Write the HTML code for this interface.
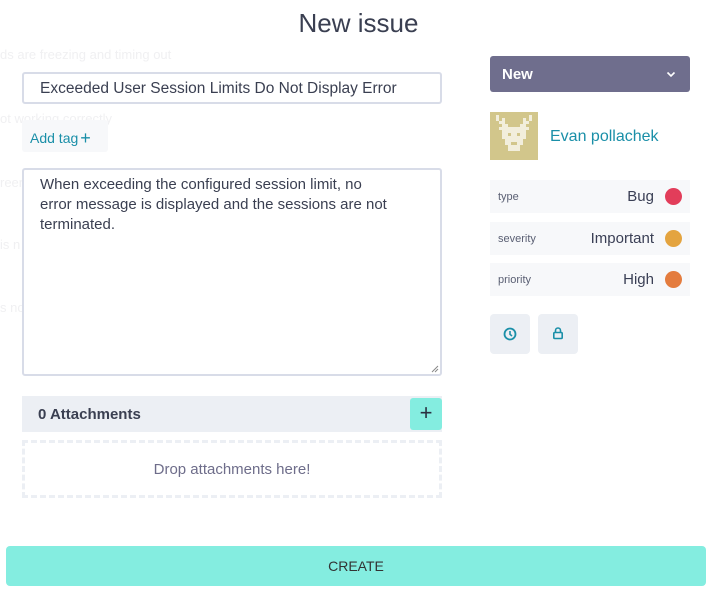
<!DOCTYPE html>
<html><head><meta charset="utf-8"><style>
*{box-sizing:border-box;margin:0;padding:0}
body{width:717px;height:597px;background:#fff;font-family:"Liberation Sans",sans-serif;position:relative;overflow:hidden;color:#3a3f51}
.a{position:absolute}
.bg{color:#f0f0f2;font-size:13px;font-family:"Liberation Sans Narrow","Liberation Sans",sans-serif}
.row{position:absolute;left:490px;width:200px;height:33px;background:#f7f8fa}
.row .l{position:absolute;left:8px;top:11px;font-size:11px;color:#5a5f73}
.row .v{position:absolute;right:36px;top:8px;font-size:15px;color:#3a3f55}
.row .d{position:absolute;right:8px;top:8px;width:17px;height:17px;border-radius:50%}
.ib{position:absolute;top:314px;width:40px;height:40px;background:#eceff4;border-radius:4px}
</style></head><body>
<div class="a bg" style="left:0;top:47px">ds are freezing and timing out</div>
<div class="a bg" style="left:0;top:111px">ot working correctly</div>
<div class="a bg" style="left:0;top:175px">reen</div>
<div class="a bg" style="left:0;top:237px">is n</div>
<div class="a bg" style="left:0;top:300px">s no</div>

<div class="a" style="left:0;width:717px;top:8px;text-align:center;font-size:26px;color:#3a3f51;font-family:'Liberation Sans Narrow','Liberation Sans',sans-serif">New issue</div>

<div class="a" style="left:22px;top:72px;width:420px;height:32px;border:2px solid #d8dce8;border-radius:3px;background:#fff"></div>
<div class="a" style="left:40px;top:80px;font-size:15.5px;color:#3a3f51">Exceeded User Session Limits Do Not Display Error</div>

<div class="a" style="left:22px;top:120px;width:86px;height:32px;background:#f7f8fa;border-radius:3px"></div>
<div class="a" style="left:30px;top:127px;font-size:14px;color:#1a8fa8">Add tag<span style="font-size:18px;position:relative;top:1px;margin-left:2px">+</span></div>

<div class="a" style="left:22px;top:168px;width:420px;height:208px;border:2px solid #d8dce8;border-radius:3px;background:#fff"></div>
<div class="a" style="left:40px;top:175px;width:354px;font-size:15px;line-height:20px;color:#3a3f51">When exceeding the configured session limit, no error message is displayed and the sessions are not terminated.</div>
<svg class="a" style="left:431px;top:365px" width="8" height="8"><path d="M1 7L7 1M4 7L7 4" stroke="#888" stroke-width="1"/></svg>

<div class="a" style="left:22px;top:396px;width:420px;height:36px;background:#eceff4"></div>
<div class="a" style="left:38px;top:406px;font-size:15px;font-weight:bold;color:#3a3f51">0 Attachments</div>
<div class="a" style="left:410px;top:398px;width:32px;height:32px;background:#84ede0;border-radius:3px;text-align:center;font-size:22px;line-height:30px;color:#2a3040">+</div>

<div class="a" style="left:22px;top:440px;width:420px;height:58px;border:3px dashed #eceff4"></div>
<div class="a" style="left:22px;top:461px;width:420px;text-align:center;font-size:15px;color:#6e6d8a;font-family:'Liberation Sans Narrow','Liberation Sans',sans-serif">Drop attachments here!</div>

<div class="a" style="left:6px;top:546px;width:700px;height:40px;background:#84ede0;border-radius:4px;text-align:center;line-height:40px;font-size:14px;color:#333;font-family:'Liberation Sans Narrow','Liberation Sans',sans-serif">CREATE</div>

<div class="a" style="left:490px;top:56px;width:200px;height:36px;background:#6f6e8d;border-radius:3px"></div>
<div class="a" style="left:502px;top:66px;font-size:15px;font-weight:bold;color:#fff">New</div>
<svg class="a" style="left:666px;top:71px" width="10" height="8"><path d="M1.5 1.5L5 5L8.5 1.5" stroke="#fff" stroke-width="1.6" fill="none"/></svg>

<svg class="a" style="left:490px;top:112px" width="48" height="48" viewBox="0 0 16 16" shape-rendering="crispEdges">
<rect width="16" height="16" fill="#d2c68b"/>
<g fill="#f2eedc">
<rect x="2" y="1" width="1" height="1"/><rect x="13" y="1" width="1" height="1"/>
<rect x="2" y="2" width="1" height="1"/><rect x="4" y="2" width="1" height="1"/><rect x="11" y="2" width="1" height="1"/><rect x="13" y="2" width="1" height="1"/>
<rect x="3" y="3" width="2" height="1"/><rect x="11" y="3" width="2" height="1"/>
<rect x="4" y="4" width="2" height="1"/><rect x="10" y="4" width="2" height="1"/>
<rect x="3" y="5" width="10" height="1"/>
<rect x="4" y="6" width="8" height="3"/>
<rect x="5" y="9" width="6" height="2"/>
<rect x="6" y="11" width="4" height="2"/>
</g>
<rect x="6" y="7" width="1" height="1" fill="#d2c68b"/><rect x="9" y="7" width="1" height="1" fill="#d2c68b"/>
<rect x="7" y="10" width="2" height="1" fill="#d2c68b"/>
</svg>
<div class="a" style="left:550px;top:128px;font-size:16px;color:#1a8fa8">Evan pollachek</div>

<div class="row" style="top:180px"><span class="l">type</span><span class="v">Bug</span><span class="d" style="background:#e23d5a"></span></div>
<div class="row" style="top:222px"><span class="l">severity</span><span class="v">Important</span><span class="d" style="background:#e4a43f"></span></div>
<div class="row" style="top:263px"><span class="l">priority</span><span class="v">High</span><span class="d" style="background:#e47c3e"></span></div>

<div class="ib" style="left:490px"><svg style="position:absolute;left:13px;top:13px" width="14" height="14" viewBox="0 0 14 14"><circle cx="7" cy="7" r="5.5" stroke="#1a8fa8" stroke-width="1.8" fill="none"/><path d="M7 4V7.3L9 9" stroke="#1a8fa8" stroke-width="1.6" fill="none"/></svg></div>
<div class="ib" style="left:538px"><svg style="position:absolute;left:14px;top:12px" width="12" height="14" viewBox="0 0 12 14"><path d="M3.5 6.5V4.5a2.5 2.5 0 0 1 5 0V6.5" stroke="#1a8fa8" stroke-width="1.6" fill="none"/><rect x="1.8" y="6.5" width="8.4" height="6" rx="1" stroke="#1a8fa8" stroke-width="1.6" fill="none"/></svg></div>
</body></html>
